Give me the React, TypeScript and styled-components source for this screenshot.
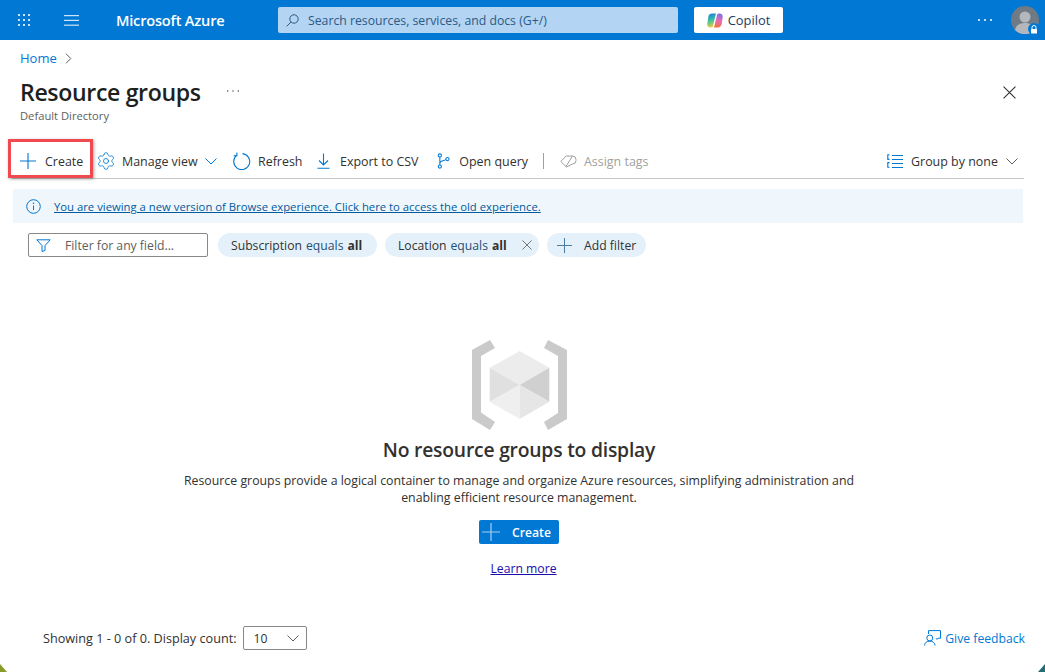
import React from 'react';
import styled, { createGlobalStyle } from 'styled-components';
import { Settings } from 'lucide-react';

const Global = createGlobalStyle`
  html, body { margin: 0; padding: 0; background: #fff; }
  body { font-family: "Open Sans", "Noto Sans", "Liberation Sans", sans-serif; color: #323130; }
  * { box-sizing: border-box; }
`;

const Page = styled.div`
  width: 1045px;
  height: 672px;
  display: flex;
  flex-direction: column;
  overflow: hidden;
  background: #fff;
  position: relative;
`;

/* wallpaper showing through the rounded window corners */
const Corner = styled.svg<{ $right?: boolean }>`
  position: absolute;
  bottom: 0;
  ${p => (p.$right ? 'right: 0;' : 'left: 0;')}
`;

/* top bar */
const TopBar = styled.header`
  height: 40px;
  flex: none;
  display: flex;
  align-items: center;
  background: #0078d4;
  padding-left: 18px;
  padding-right: 6px;
`;

const BurgerWrap = styled.div`
  margin-left: 33px;
  display: flex;
`;

const Brand = styled.div`
  width: 162px;
  margin-left: 37px;
  font-size: 14.6px;
  font-weight: 600;
  color: #fff;
  letter-spacing: -0.2px;
`;

const SearchBox = styled.div`
  width: 400px;
  height: 26px;
  display: flex;
  align-items: center;
  gap: 9px;
  padding-left: 8px;
  background: #b3d4f2;
  border-radius: 2px;
  font-size: 12.25px;
  color: #2b5a85;
`;

const CopilotButton = styled.div`
  width: 89px;
  height: 26px;
  margin-left: 16px;
  display: flex;
  align-items: center;
  justify-content: center;
  gap: 5px;
  background: #fff;
  border-radius: 2px;
  font-size: 12.9px;
  font-weight: 500;
  color: #243a5e;
`;

const TopRight = styled.div`
  margin-left: auto;
  display: flex;
  align-items: center;
  gap: 19px;
`;

const Avatar = styled.div`
  position: relative;
  width: 28px;
  height: 28px;
`;

const LockBadge = styled.div`
  position: absolute;
  right: -1px;
  bottom: -1px;
  width: 12px;
  height: 12px;
  border-radius: 50%;
  background: #0078d4;
  display: flex;
  align-items: center;
  justify-content: center;
`;

/* page head */
const Crumbs = styled.nav`
  height: 36px;
  flex: none;
  display: flex;
  align-items: center;
  gap: 8px;
  padding-left: 20px;
  font-size: 13px;
  color: #0078d4;
`;

const Head = styled.div`
  height: 52px;
  flex: none;
  display: flex;
  padding: 0 29px 0 20px;
`;

const TitleBlock = styled.div`
  display: flex;
  flex-direction: column;
`;

const TitleLine = styled.div`
  display: flex;
  align-items: center;
  height: 32px;
`;

const Title = styled.h1`
  margin: 0;
  font-size: 23.1px;
  font-weight: 600;
  color: #201f1e;
  letter-spacing: -0.35px;
`;

const TitleMore = styled.span`
  margin-left: 26px;
  margin-top: -2px;
  display: flex;
`;

const SubTitle = styled.div`
  font-size: 11.2px;
  color: #605e5c;
`;

const CloseWrap = styled.div`
  margin-left: auto;
  margin-top: 10px;
  display: flex;
`;

/* command bar */
const Commands = styled.div`
  height: 51px;
  flex: none;
  margin: 0 21px 0 12px;
  padding-left: 8px;
  padding-top: 16px;
  display: flex;
  align-items: center;
  border-bottom: 1px solid #c8c6c4;
  position: relative;
`;

const Command = styled.div<{ $gap?: number; $width: number; $muted?: boolean }>`
  width: ${p => p.$width}px;
  flex: none;
  display: flex;
  align-items: center;
  gap: ${p => p.$gap ?? 7}px;
  font-size: 12.45px;
  color: ${p => (p.$muted ? '#a19f9d' : '#323130')};
  white-space: nowrap;
`;

const GearIcon = styled(Settings)`
  margin-left: -2px;
  margin-right: -1px;
`;

const Divider = styled.div`
  width: 1px;
  height: 16px;
  background: #a19f9d;
  flex: none;
  margin: 0 16px 0 15px;
`;

const GroupBy = styled(Command)`
  margin-left: auto;
  margin-right: 6px;
`;

const Highlight = styled.div`
  position: absolute;
  left: -4px;
  top: 11px;
  width: 85px;
  height: 39px;
  border: 3px solid #f04a4f;
  box-shadow: 1px 1px 3px rgba(0, 0, 0, 0.35);
`;

const InfoBanner = styled.div`
  height: 34px;
  flex: none;
  margin: 10px 22px 0 13px;
  display: flex;
  align-items: center;
  gap: 13px;
  padding-left: 13px;
  background: #eff6fc;
  font-size: 11.3px;
`;

const BannerLink = styled.a`
  color: #005a9e;
  text-decoration: underline;
`;

/* filters */
const Filters = styled.div`
  height: 24px;
  flex: none;
  margin-top: 10px;
  padding-left: 28px;
  display: flex;
  align-items: center;
  gap: 8px;
`;

const FilterInput = styled.div`
  width: 180px;
  height: 24px;
  margin-right: 2px;
  display: flex;
  align-items: center;
  gap: 14px;
  padding-left: 7px;
  border: 1px solid #8a8886;
  border-radius: 2px;
  font-size: 12.2px;
  color: #605e5c;
`;

const Pill = styled.div<{ $width: number }>`
  width: ${p => p.$width}px;
  height: 24px;
  display: flex;
  align-items: center;
  padding-left: 13px;
  background: #e5f1fa;
  border-radius: 12px;
  font-size: 12.2px;
  color: #323130;
  white-space: nowrap;

  i {
    font-style: normal;
    color: #1f4e79;
    margin-left: 4px;
  }

  b {
    font-weight: 700;
    margin-left: 4px;
  }
`;

const PillClose = styled.span`
  margin-left: 15px;
  display: flex;
`;

const AddFilter = styled(Pill)`
  gap: 12px;
  padding-left: 10px;
`;

/* empty state */
const Empty = styled.main`
  flex: 1;
  display: flex;
  flex-direction: column;
  align-items: center;
  padding-top: 83px;
  padding-right: 7px;
`;

const EmptyTitle = styled.h2`
  margin: 7px 0 0;
  font-size: 19.3px;
  font-weight: 600;
  line-height: 26px;
  color: #323130;
  letter-spacing: -0.2px;
`;

const EmptyText = styled.p`
  margin: 9px 0 0;
  width: 700px;
  text-align: center;
  font-size: 12.33px;
  line-height: 17px;
  color: #323130;
`;

const CreateButton = styled.div`
  width: 80px;
  height: 24px;
  margin-top: 14px;
  padding-bottom: 0;
  display: flex;
  align-items: center;
  gap: 12px;
  padding-left: 3px;
  background: #0078d4;
  border-radius: 2px;
  color: #fff;
  font-size: 12.2px;
  font-weight: 600;
`;

const LearnMore = styled.a`
  margin-top: 16px;
  margin-left: 9px;
  font-size: 12.2px;
  line-height: 17px;
  color: #1a0dab;
  text-decoration: underline;
`;

/* footer */
const Footer = styled.footer`
  height: 46px;
  flex: none;
  display: flex;
  align-items: flex-start;
  padding-left: 43px;
  padding-right: 20px;
`;

const Showing = styled.div`
  height: 24px;
  display: flex;
  align-items: center;
  font-size: 12.65px;
  color: #323130;
`;

const CountSelect = styled.div`
  width: 64px;
  height: 24px;
  margin-left: 7px;
  display: flex;
  align-items: center;
  justify-content: space-between;
  padding: 0 7px 0 9px;
  border: 1px solid #8a8886;
  border-radius: 2px;
  font-size: 12.2px;
`;

const Feedback = styled.div`
  margin-left: auto;
  height: 24px;
  display: flex;
  align-items: center;
  gap: 4px;
  font-size: 12.2px;
  color: #0078d4;
`;

const Plus = ({ size = 16, color = '#0078d4' }: { size?: number; color?: string }) => (
  <svg width={size} height={size} viewBox="0 0 16 16">
    <path d="M8 0v16M0 8h16" stroke={color} strokeWidth="1.1" fill="none" />
  </svg>
);

const Chevron = ({ color = '#605e5c', w = 12 }: { color?: string; w?: number }) => (
  <svg width={w} height="7" viewBox="0 0 12 7">
    <path d="M.5.5 6 6 11.5.5" stroke={color} strokeWidth="1" fill="none" />
  </svg>
);

const Cross = ({ size = 12, color = '#605e5c' }: { size?: number; color?: string }) => (
  <svg width={size} height={size} viewBox="0 0 12 12">
    <path d="M.5.5l11 11M11.5.5l-11 11" stroke={color} strokeWidth="1" fill="none" />
  </svg>
);

const Waffle = () => (
  <svg width="13" height="13" viewBox="0 0 13 13" fill="#cfe4f6">
    {[0, 5, 10].flatMap(y => [0, 5, 10].map(x => <rect key={`${x}${y}`} x={x} y={y} width="2" height="2" />))}
  </svg>
);

const Burger = () => (
  <svg width="15" height="11" viewBox="0 0 15 11" fill="#cfe4f6">
    <rect y="0" width="15" height="1.2" />
    <rect y="4.8" width="15" height="1.2" />
    <rect y="9.6" width="15" height="1.2" />
  </svg>
);

const SearchIcon = () => (
  <svg width="13" height="13" viewBox="0 0 13 13" fill="none" stroke="#2b5a85" strokeWidth="1">
    <circle cx="8" cy="5" r="4.2" />
    <path d="M5 8 .7 12.3" />
  </svg>
);

const CopilotLogo = () => (
  <svg width="16" height="15" viewBox="0 0 16 15">
    <defs>
      <linearGradient id="cpL" x1="0.3" y1="0" x2="0.5" y2="1">
        <stop offset="0" stopColor="#1b7fe0" />
        <stop offset="0.5" stopColor="#3fc49a" />
        <stop offset="1" stopColor="#f3d03c" />
      </linearGradient>
      <linearGradient id="cpR" x1="0.6" y1="0" x2="0.4" y2="1">
        <stop offset="0" stopColor="#7a6ee8" />
        <stop offset="0.5" stopColor="#e86bb8" />
        <stop offset="1" stopColor="#f6703c" />
      </linearGradient>
    </defs>
    <path d="M5 .5h4L6 13c-.2 1-1 1.6-2 1.6H3.4C1.4 14.6 0 13 .3 11l.9-6.6C1.5 2 3 .5 5 .5z" fill="url(#cpL)" />
    <path d="M11 14.5H7L10 2c.2-1 1-1.6 2-1.6h.6c2 0 3.4 1.6 3.1 3.6l-.9 6.6c-.3 2.4-1.8 3.9-3.8 3.9z" fill="url(#cpR)" />
  </svg>
);

const Dots = ({ color, w = 14, r = 0.8 }: { color: string; w?: number; r?: number }) => (
  <svg width={w} height="4" viewBox={`0 0 ${w} 4`} fill={color}>
    <circle cx={r} cy="2" r={r} />
    <circle cx={w / 2} cy="2" r={r} />
    <circle cx={w - r} cy="2" r={r} />
  </svg>
);

const RefreshIcon = () => (
  <svg width="18" height="18" viewBox="0 0 18 18" fill="none" stroke="#0078d4" strokeWidth="1.1">
    <path d="M9.5 1.6A8 8 0 1 1 3.6 3.4" />
    <path d="M3.9.4v3.4H.6" />
  </svg>
);

const DownloadIcon = () => (
  <svg width="13" height="16" viewBox="0 0 13 16" fill="none" stroke="#0078d4" strokeWidth="1.1">
    <path d="M6.5.5v11M2 7.5 6.5 12 11 7.5M.5 15.2h12" />
  </svg>
);

const QueryIcon = () => (
  <svg width="14" height="16" viewBox="0 0 14 16" fill="none" stroke="#0078d4" strokeWidth="1.1">
    <circle cx="3" cy="2.2" r="1.7" />
    <circle cx="3" cy="13.8" r="1.7" />
    <circle cx="11" cy="6" r="1.7" />
    <path d="M3 3.9v8.2M3 10.5c0-2.5 2-2.6 3.8-3 1-.2 1.9-.5 2.5-1" />
  </svg>
);

const TagIcon = () => (
  <svg width="17" height="13" viewBox="0 0 17 13" fill="none" stroke="#a19f9d" strokeWidth="1">
    <path d="M.8 6.5 6.2 1h6.3a3.5 3.5 0 0 1 3.5 3.5v1a3.5 3.5 0 0 1-3.5 3.5l-6 3z" />
    <path d="M6 11.5 12.5 1" />
  </svg>
);

const GroupIcon = () => (
  <svg width="16" height="14" viewBox="0 0 16 14" fill="none" stroke="#0078d4" strokeWidth="1.1">
    <path d="M5 1.5h11M5 5.5h11M5 9.5h11M5 13.5h11" />
    <path d="M2.5.8H.8v4.6h1.7M2.5 8.6H.8v4.6h1.7" />
  </svg>
);

const InfoIcon = () => (
  <svg width="15" height="15" viewBox="0 0 15 15" fill="none" stroke="#0078d4">
    <circle cx="7.5" cy="7.5" r="6.8" />
    <path d="M7.5 6.5v4.6" />
    <circle cx="7.5" cy="4.2" r=".8" fill="#0078d4" stroke="none" />
  </svg>
);

const FunnelIcon = () => (
  <svg width="15" height="13" viewBox="0 0 15 13" fill="none" stroke="#0078d4">
    <path d="M.8.8h13.4L9 6.6v4.9l-3 1V6.6z" />
  </svg>
);

const FeedbackIcon = () => (
  <svg width="17" height="16" viewBox="0 0 17 16" fill="none" stroke="#0078d4" strokeWidth="1">
    <path d="M4.5 4V.6h12v7.6H14l-1 1.2-1-1.2" />
    <circle cx="5.8" cy="8" r="3" />
    <path d="M.5 15.5c.3-2.8 2.4-4.4 5.3-4.4s5 1.6 5.3 4.4" />
  </svg>
);

const CubeArt = () => (
  <svg width="95" height="90" viewBox="0 0 95 90">
    <path d="M0 10 18 0l5 8-14 8v56.5L23 82l-5 8-18-11z" fill="#cacaca" />
    <path d="M95 10 76 0l-4 8 14 8v57l-14 9 4 8 19-11z" fill="#cacaca" />
    <path d="M47.7 11 77.3 27.7 47.7 45 17.7 27.7z" fill="#ececec" />
    <path d="M17.7 27.7 47.7 45 17.7 61.7z" fill="#e0e0e0" />
    <path d="M77.3 27.7 47.7 45 77.3 61.7z" fill="#d0d0d0" />
    <path d="M17.7 61.7 47.7 45v34z" fill="#efefef" />
    <path d="M77.3 61.7 47.7 45v34z" fill="#e6e6e6" />
  </svg>
);

export default function App() {
  return (
    <Page>
      <Global />
      <TopBar>
        <Waffle />
        <BurgerWrap>
          <Burger />
        </BurgerWrap>
        <Brand>Microsoft Azure</Brand>
        <SearchBox>
          <SearchIcon />
          Search resources, services, and docs (G+/)
        </SearchBox>
        <CopilotButton>
          <CopilotLogo />
          Copilot
        </CopilotButton>
        <TopRight>
          <Dots color="#fff" w={14} r={1} />
          <Avatar>
            <svg width="28" height="28" viewBox="0 0 28 28">
              <circle cx="14" cy="14" r="14" fill="#6f7a85" />
              <circle cx="14" cy="11" r="5.5" fill="#b4b8bc" />
              <path d="M4 24c1-5 5-7 10-7s9 2 10 7a14 14 0 0 1-20 0z" fill="#b4b8bc" />
            </svg>
            <LockBadge>
              <svg width="8" height="9" viewBox="0 0 8 9">
                <path d="M2 4V2.5a2 2 0 0 1 4 0V4" stroke="#fff" fill="none" />
                <rect x="1" y="4" width="6" height="4.6" rx=".6" fill="#fff" />
              </svg>
            </LockBadge>
          </Avatar>
        </TopRight>
      </TopBar>

      <Crumbs>
        Home
        <svg width="7" height="11" viewBox="0 0 7 11">
          <path d="M1 .7 5.8 5.5 1 10.3" stroke="#605e5c" fill="none" />
        </svg>
      </Crumbs>

      <Head>
        <TitleBlock>
          <TitleLine>
            <Title>Resource groups</Title>
            <TitleMore>
              <Dots color="#3b3a39" w={12} r={0.7} />
            </TitleMore>
          </TitleLine>
          <SubTitle>Default Directory</SubTitle>
        </TitleBlock>
        <CloseWrap>
          <Cross size={13} color="#323130" />
        </CloseWrap>
      </Head>

      <Commands>
        <Highlight />
        <Command $width={78} $gap={9}>
          <Plus />
          Create
        </Command>
        <Command $width={135} $gap={7}>
          <GearIcon size={20} color="#0078d4" strokeWidth={1} />
          Manage view
          <Chevron color="#0078d4" />
        </Command>
        <Command $width={84} $gap={7}>
          <RefreshIcon />
          Refresh
        </Command>
        <Command $width={120} $gap={10}>
          <DownloadIcon />
          Export to CSV
        </Command>
        <Command $width={91} $gap={9}>
          <QueryIcon />
          Open query
        </Command>
        <Divider />
        <Command $width={90} $gap={7} $muted>
          <TagIcon />
          Assign tags
        </Command>
        <GroupBy $width={131} $gap={8}>
          <GroupIcon />
          Group by none
          <Chevron color="#605e5c" />
        </GroupBy>
      </Commands>

      <InfoBanner>
        <InfoIcon />
        <BannerLink>You are viewing a new version of Browse experience. Click here to access the old experience.</BannerLink>
      </InfoBanner>

      <Filters>
        <FilterInput>
          <FunnelIcon />
          Filter for any field...
        </FilterInput>
        <Pill $width={159}>
          Subscription <i>equals</i> <b>all</b>
        </Pill>
        <Pill $width={154}>
          Location <i>equals</i> <b>all</b>
          <PillClose>
            <Cross size={10} />
          </PillClose>
        </Pill>
        <AddFilter $width={99}>
          <Plus size={15} color="#4a7ea8" />
          Add filter
        </AddFilter>
      </Filters>

      <Empty>
        <CubeArt />
        <EmptyTitle>No resource groups to display</EmptyTitle>
        <EmptyText>
          Resource groups provide a logical container to manage and organize Azure resources, simplifying administration and enabling efficient resource management.
        </EmptyText>
        <CreateButton>
          <Plus size={18} color="#a5cdec" />
          Create
        </CreateButton>
        <LearnMore>Learn more</LearnMore>
      </Empty>

      <Footer>
        <Showing>
          Showing 1 - 0 of 0. Display count:
          <CountSelect>
            10
            <Chevron />
          </CountSelect>
        </Showing>
        <Feedback>
          <FeedbackIcon />
          Give feedback
        </Feedback>
      </Footer>

      <Corner width="7" height="8" viewBox="0 0 7 8">
        <path d="M0 0v8h7z" fill="#8a9a2a" />
      </Corner>
      <Corner $right width="7" height="8" viewBox="0 0 7 8">
        <path d="M7 0v8H0z" fill="#1f6f75" />
      </Corner>
    </Page>
  );
}
